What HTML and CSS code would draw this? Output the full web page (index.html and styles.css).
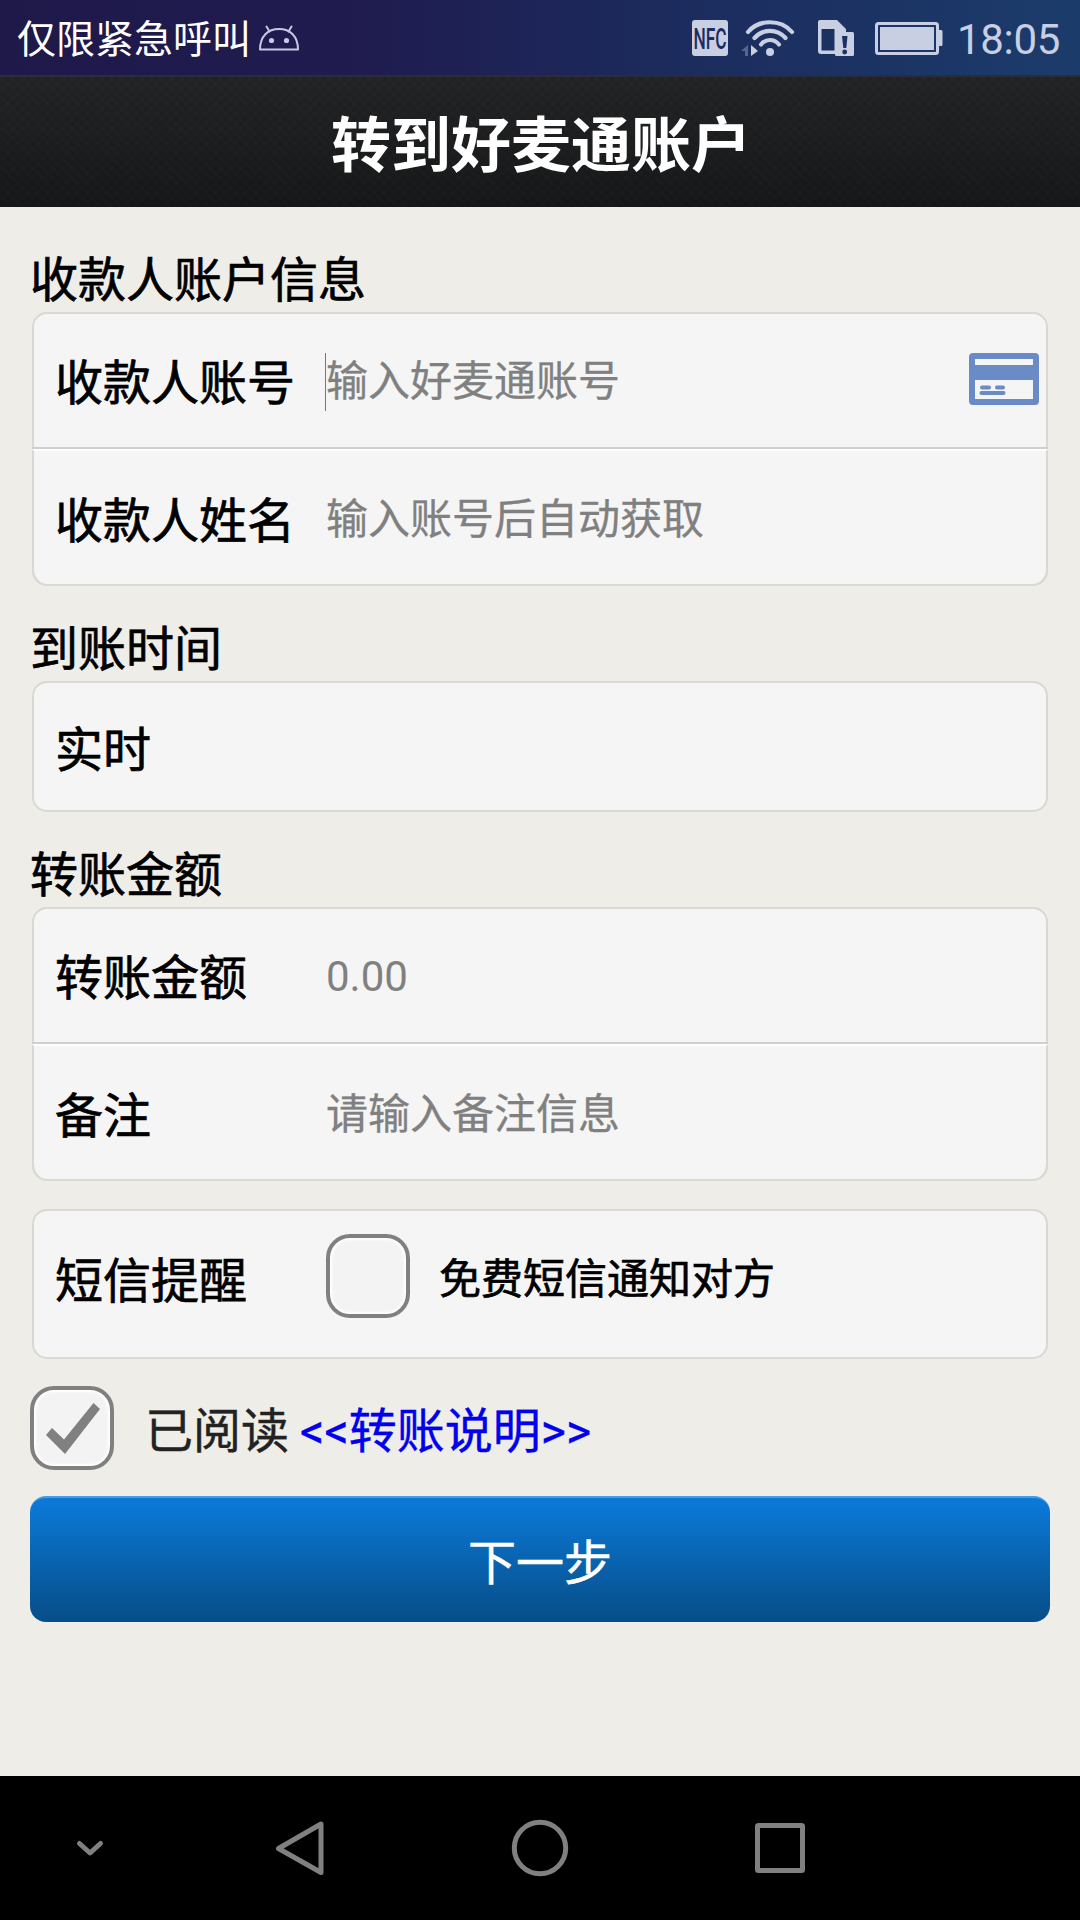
FILE: index.html
```html
<!DOCTYPE html>
<html lang="zh-CN">
<head>
<meta charset="utf-8">
<title>转到好麦通账户</title>
<link rel="stylesheet" href="styles.css">
</head>
<body>
<div class="status">
  <span class="carrier">仅限紧急呼叫</span>
  <svg class="robot" width="40" height="26" viewBox="0 0 40 26" fill="none" stroke="#c9c5e2" stroke-width="2" stroke-linejoin="round" stroke-linecap="round"><path d="M1 24.500C1 11 9 4 20 4s19 7 19 20.500z"/><path d="M7.500 1.500l3 5M32.500 1.500l-3 5"/><circle cx="12.500" cy="15.500" r="1.600" fill="#c9c5e2"/><circle cx="27.500" cy="15.500" r="1.600" fill="#c9c5e2"/></svg>
  <svg class="tray" width="252" height="36" viewBox="0 0 252 36" fill="#c9cfe3">
    <rect width="36" height="36" rx="3"/>
    <text class="nfc" x="1.500" y="29" textLength="33" lengthAdjust="spacingAndGlyphs">NFC</text>
    <g fill="none" stroke="#c9cfe3" stroke-width="4.200" stroke-linecap="round"><path d="M56 12C67-1 89-1 100 12"/><path d="M62.500 18C71 8.500 85 8.500 93.500 18"/><path d="M69 24.500C74 18.500 82 18.500 87 24.500"/></g>
    <circle cx="78" cy="32" r="4"/>
    <path d="M59 25l7 6-7 5z"/><path d="M56 25v11h-3v-5h-4z" opacity=".35"/>
    <path fill-rule="evenodd" d="M128 0h17l9 9v3h-9v22h-16q-3 0-3-3V2q0-2 2-2zM129.500 9v21.500h13V9z"/>
    <rect x="143" y="12" width="19" height="24" rx="1.500"/>
    <path fill="#1d3064" d="M150 16h5.500l-1.200 12h-3z"/><circle cx="152.700" cy="32" r="2.400" fill="#1d3064"/>
    <rect x="184.500" y="3.500" width="61" height="30" rx="2" fill="none" stroke="#c9cfe3" stroke-width="3"/>
    <rect x="188" y="7" width="54" height="23"/><path d="M247 10h2q1.500 0 1.500 1.500v13q0 1.500-1.500 1.500h-2z"/>
  </svg>
  <span class="time">18:05</span>
</div>
<header class="header"><h1>转到好麦通账户</h1></header>
<main class="page">
  <h2>收款人账户信息</h2>
  <section class="card">
    <div class="row">
      <label>收款人账号</label>
      <div class="field focus">输入好麦通账号</div>
      <svg class="contacts" width="70" height="52" viewBox="0 0 70 52"><rect width="70" height="52" rx="4" fill="#6b8bc7"/><path fill="#f5f5f5" d="M6 6h58v6H6zM6 27h58v19H6z"/><path stroke="#6b8bc7" stroke-width="4" stroke-linecap="round" d="M13 34.500h7M28 34.500h6M12.500 40h22"/></svg>
    </div>
    <div class="row last">
      <label>收款人姓名</label>
      <div class="field">输入账号后自动获取</div>
    </div>
  </section>
  <h2>到账时间</h2>
  <section class="card">
    <div class="row single"><label>实时</label></div>
  </section>
  <h2>转账金额</h2>
  <section class="card">
    <div class="row"><label>转账金额</label><div class="field amount">0.00</div></div>
    <div class="row last"><label>备注</label><div class="field">请输入备注信息</div></div>
  </section>
  <section class="card notice">
    <label>短信提醒</label>
    <span class="check"></span>
    <span class="notice-text">免费短信通知对方</span>
  </section>
  <div class="agree">
    <span class="check"><svg width="76" height="76" viewBox="0 0 76 76" fill="#808080"><path d="M12 45l6-7 12 11.500L59.500 13l6.500 6-35 45z"/></svg></span>
    <span class="read">已阅读</span>
    <a class="terms">&lt;&lt;转账说明&gt;&gt;</a>
  </div>
  <div class="next">下一步</div>
</main>
<nav class="nav">
  <svg width="1080" height="144" viewBox="0 0 1080 144" fill="none" stroke="#808080" stroke-width="5" stroke-linejoin="round" stroke-linecap="round"><path d="M79.500 67.500l10.500 9.500 10.500-9.500"/><path d="M321 48v48.500L278.500 72.500z"/><circle cx="540" cy="72" r="25.700"/><rect x="757.500" y="49.500" width="45" height="45" rx="1"/></svg>
</nav>
</body>
</html>
```
FILE: styles.css
```css
* { box-sizing: border-box; }
body {
  margin: 0;
  width: 1080px;
  height: 1920px;
  display: flex;
  flex-direction: column;
  background: #eeede8;
  color: #000;
  font-family: Roboto, "Noto Sans CJK SC", sans-serif;
  overflow: hidden;
}
svg { display: block; flex: none; }
h1, h2 { margin: 0; }

.status {
  height: 75px;
  flex: none;
  display: flex;
  align-items: center;
  padding-left: 17px;
  background: linear-gradient(90deg, #1f194a 0%, #1f1c50 35%, #1c2a5c 60%, #1b3c6b 100%);
}
.carrier { padding-top: 5px; font-size: 39px; line-height: 70px; width: 242px; color: #fff; white-space: nowrap; }
.robot { margin-top: 1px; }
.tray { margin-left: 393px; }
.nfc { font: 500 30px Roboto, sans-serif; fill: #1d2b60; }
.time { margin: 3px 0 0 13px; color: #c9cfe3; font-size: 42px; letter-spacing: -.3px; }

.header {
  height: 132px;
  flex: none;
  padding: 4px 0 0 2px;
  border-top: 2px solid #2c2c33;
  background:
    repeating-linear-gradient(45deg, rgba(255,255,255,.006) 0 3px, transparent 3px 7px),
    repeating-linear-gradient(-45deg, rgba(0,0,0,.05) 0 3px, transparent 3px 7px),
    linear-gradient(#222425, #161718);
  text-align: center;
}
h1 { font-size: 60px; line-height: 132px; font-weight: 700; color: #fff; }

.page { flex: 1; padding: 31px 30px 0; }
h2, label, .notice-text { font-weight: 400; -webkit-text-stroke: .7px #000; }
h2 { padding-top: 12px; font-size: 48px; line-height: 62px; height: 74px; }
.card {
  margin: 0 2px 21px;
  border: 2px solid #d8d9d3;
  border-radius: 15px;
  background: #f5f5f5;
}
.row { display: flex; align-items: center; height: 135px; padding: 4px 7px 0 21px; }
.row.last {
  margin: 0 -2px;
  padding: 8px 9px 0 23px;
  border-top: 2px solid #fff;
  box-shadow: 0 -2px #cfcfcf;
  border-left: 2px solid #d8d9d3;
  border-right: 2px solid #d8d9d3;
  border-radius: 0 0 15px 15px;
  padding: 8px 7px 0 21px;
}
.row.single { height: 127px; padding-top: 8px; }
label { width: 271px; font-size: 48px; line-height: 72px; }
.field { flex: 1; margin-top: -3px; font-size: 42px; line-height: 58px; color: #808080; -webkit-text-stroke: .3px #808080; }
.field.focus { box-shadow: -1px 0 #777; }
.field.amount { margin-top: -4px; -webkit-text-stroke: 0; }
.contacts { margin-top: -9px; }
.notice { display: flex; height: 150px; padding: 23px 0 0 21px; margin: 28px 2px 27px; }
.notice label { padding-top: 12px; }
.check {
  flex: none;
  width: 84px;
  height: 84px;
  border: 4px solid #808080;
  border-radius: 24px;
  background: #f3f3f3;
  box-shadow: inset 0 0 3px 2px #fff;
}
.notice-text { margin-left: 29px; padding-top: 4px; font-size: 42px; line-height: 84px; }
.agree { display: flex; height: 84px; font-size: 48px; line-height: 92px; margin-bottom: 26px; }
.read { margin-left: 31px; width: 155px; color: #222; -webkit-text-stroke: .4px #222; }
.terms { color: #0000ee; -webkit-text-stroke: .4px #0000ee; }
.next {
  height: 126px;
  padding-top: 4px;
  border-radius: 16px;
  border-top: 2px solid #4d9be0;
  background: linear-gradient(#0b79d8 0%, #0b76d2 10%, #075290 88%, #064e8a 100%);
  color: #fff;
  font-size: 48px;
  line-height: 124px;
  text-align: center;
  -webkit-text-stroke: .5px #fff;
}
.nav { height: 144px; flex: none; background: #000; }
```
